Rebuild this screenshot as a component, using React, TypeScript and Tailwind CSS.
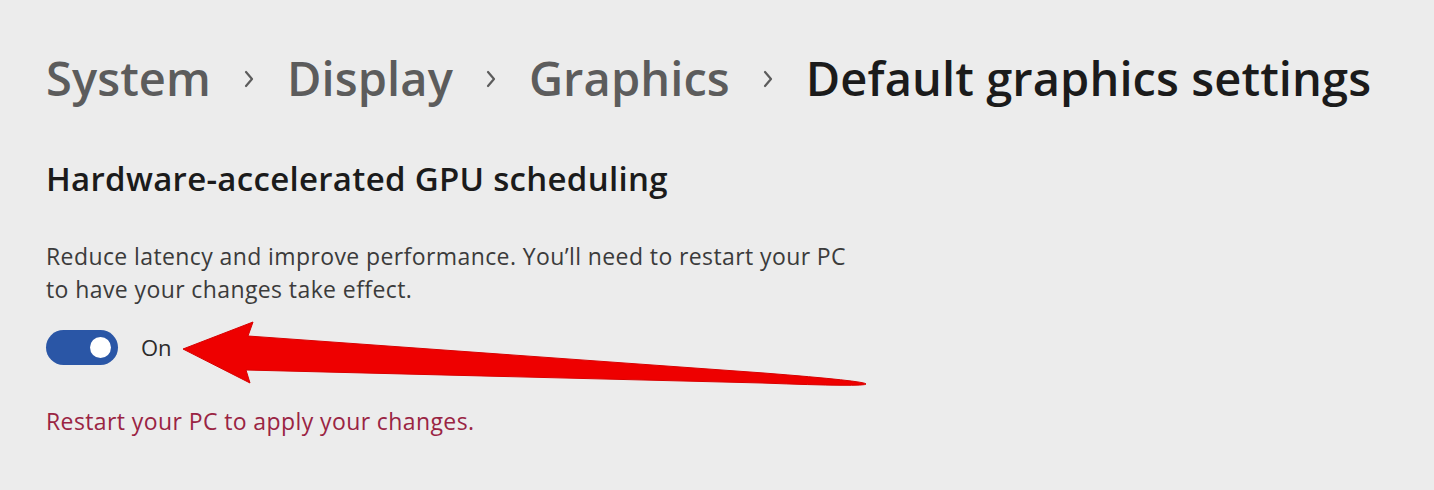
import React from 'react';

const Chevron: React.FC = () => (
  <svg width="14" height="18" viewBox="0 0 14 18" className="mx-[31px] mt-[2px] shrink-0">
    <polyline points="4,2 10,9 4,16" fill="none" stroke="#5c5c5c" strokeWidth="2.2" strokeLinecap="round" strokeLinejoin="round" />
  </svg>
);

const App: React.FC = () => {
  return (
    <div className="relative w-[1434px] h-[490px] bg-[#ececec] overflow-hidden" style={{ fontFamily: '"Open Sans", "Noto Sans", sans-serif' }}>
      <div className="flex flex-col pl-[46px] pt-[46px]">
        {/* breadcrumb */}
        <div className="flex items-center h-[64px] text-[47px] font-semibold leading-[64px] tracking-[0.1px]">
          <span className="text-[#5c5c5c]">System</span>
          <Chevron />
          <span className="text-[#5c5c5c]">Display</span>
          <Chevron />
          <span className="text-[#5c5c5c]">Graphics</span>
          <Chevron />
          <span className="text-[#1b1b1b]">Default graphics settings</span>
        </div>

        <h2 className="mt-[47px] text-[33px] leading-[44px] font-semibold text-[#1b1b1b] tracking-[0.3px]">
          Hardware-accelerated GPU scheduling
        </h2>

        <p className="mt-[39px] text-[23px] leading-[33px] text-[#3b3b3b] tracking-[0.4px]">
          Reduce latency and improve performance. You’ll need to restart your PC
          <br />
          to have your changes take effect.
        </p>

        <div className="mt-[24px] flex items-center h-[35px]">
          <div className="w-[72px] h-[35px] rounded-full bg-[#2a56a6] flex items-center justify-end pr-[7px]">
            <div className="w-[21px] h-[21px] rounded-full bg-white" />
          </div>
          <span className="ml-[23px] text-[22px] text-[#2b2b2b]">On</span>
        </div>

        <p className="mt-[41px] text-[23px] leading-[30px] text-[#9a2443] tracking-[0.4px]">
          Restart your PC to apply your changes.
        </p>
      </div>

      {/* annotation arrow */}
      <svg className="absolute left-0 top-0 pointer-events-none" width="1434" height="490" viewBox="0 0 1434 490">
        <path
          d="M183,349 L253,322 L248,336 L764,373 Q866,381 866,384 Q866,387 762,383 L246,370 L250,383 Z"
          fill="#ee0000"
          stroke="#d80000"
          strokeWidth="1"
          strokeLinejoin="round"
        />
      </svg>
    </div>
  );
};

export default App;
